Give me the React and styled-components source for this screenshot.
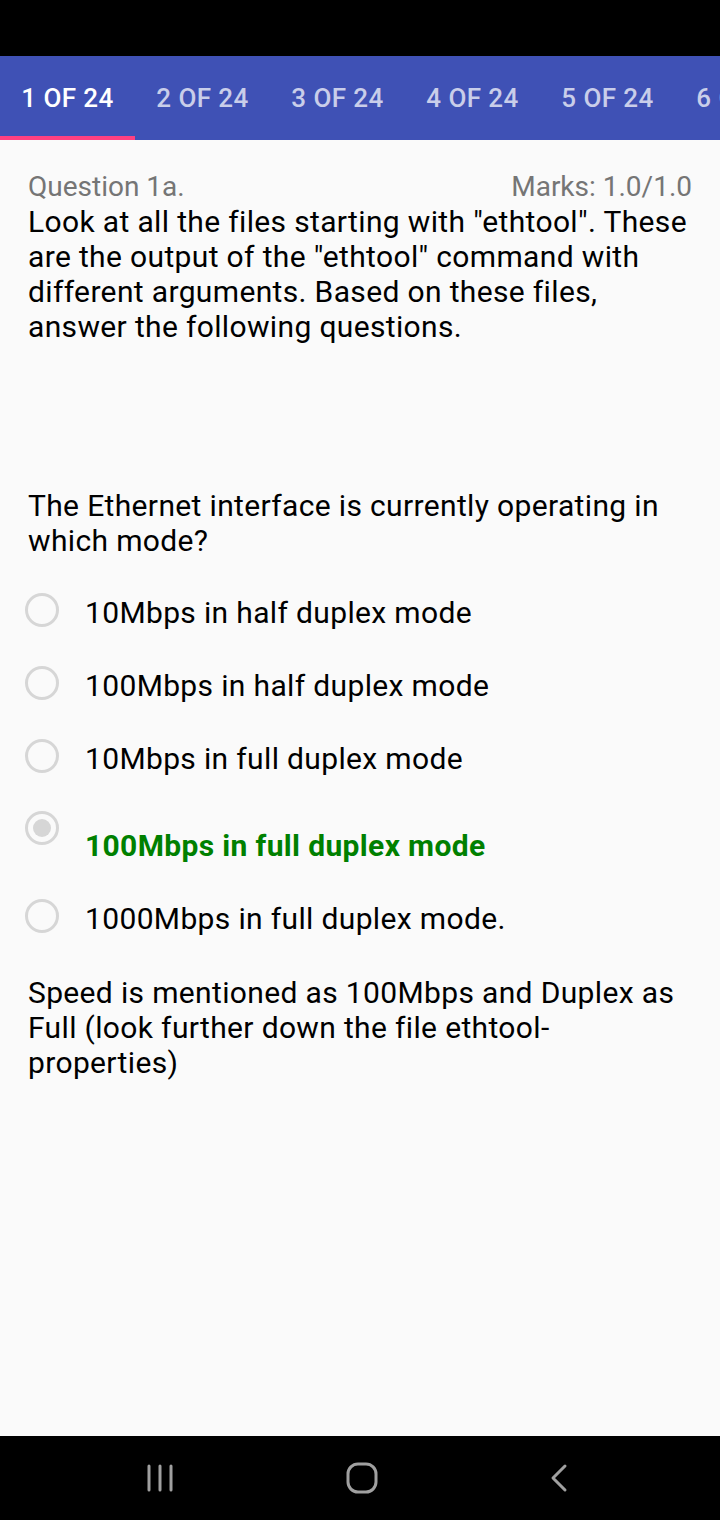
import React from 'react';
import styled, { createGlobalStyle } from 'styled-components';

const Global = createGlobalStyle`
  html, body { margin: 0; padding: 0; background: #000; }
  body { font-family: Roboto, "Noto Sans", sans-serif; }
`;

const Screen = styled.div`
  width: 720px;
  height: 1520px;
  display: flex;
  flex-direction: column;
  background: #fafafa;
  overflow: hidden;
`;

const StatusBar = styled.div`
  height: 56px;
  background: #000;
  flex-shrink: 0;
`;

const Tabs = styled.div`
  height: 84px;
  background: #3f51b5;
  display: flex;
  flex-shrink: 0;
  overflow: hidden;
`;

const Tab = styled.div`
  position: relative;
  flex: 0 0 135px;
  display: flex;
  align-items: center;
  justify-content: center;
  font-size: 26px;
  font-weight: 500;
  letter-spacing: 0.4px;
  color: ${p => (p.active ? '#ffffff' : 'rgba(255,255,255,0.72)')};
  white-space: nowrap;
  &::after {
    content: '';
    display: ${p => (p.active ? 'block' : 'none')};
    position: absolute;
    left: 0;
    right: 0;
    bottom: 0;
    height: 4px;
    background: #ff4081;
  }
`;

const Content = styled.div`
  flex: 1;
  padding: 30px 28px 0 28px;
  display: flex;
  flex-direction: column;
`;

const Header = styled.div`
  display: flex;
  justify-content: space-between;
  font-size: 28px;
  line-height: 34px;
  color: #757575;
`;

const Para = styled.p`
  margin: ${p => p.mt || 0}px 0 0 0;
  font-size: 30px;
  line-height: 35px;
  letter-spacing: 0.35px;
  color: #000;
`;

const Options = styled.div`
  display: flex;
  flex-direction: column;
  margin-top: 27px;
`;

const Option = styled.div`
  display: flex;
  align-items: flex-start;
  height: ${p => (p.tall ? 87 : 73)}px;
`;

const Radio = styled.span`
  flex: 0 0 auto;
  width: 28px;
  height: 28px;
  margin: ${p => (p.tall ? 7 : 8)}px 0 0 -3px;
  border: 3px solid #d6d6d6;
  border-radius: 50%;
  display: flex;
  align-items: center;
  justify-content: center;
  &::after {
    content: '';
    display: ${p => (p.checked ? 'block' : 'none')};
    width: 18px;
    height: 18px;
    border-radius: 50%;
    background: #d6d6d6;
  }
`;

const Label = styled.span`
  margin-left: 26px;
  margin-top: ${p => (p.tall ? 24 : 10)}px;
  font-size: 30px;
  line-height: 35px;
  letter-spacing: 0.35px;
  color: ${p => (p.correct ? '#008000' : '#000')};
  font-weight: ${p => (p.correct ? 700 : 400)};
`;

const NavBar = styled.div`
  height: 84px;
  background: #000;
  flex-shrink: 0;
  display: flex;
  align-items: center;
  gap: 171px;
  padding-left: 145px;
`;

const tabs = ['1 OF 24', '2 OF 24', '3 OF 24', '4 OF 24', '5 OF 24', '6 OF 24'];
const options = [
  '10Mbps in half duplex mode',
  '100Mbps in half duplex mode',
  '10Mbps in full duplex mode',
  '100Mbps in full duplex mode',
  '1000Mbps in full duplex mode.',
];

export default function App() {
  return (
    <Screen>
      <Global />
      <StatusBar />
      <Tabs>
        {tabs.map((t, i) => (
          <Tab key={t} active={i === 0}>{t}</Tab>
        ))}
      </Tabs>
      <Content>
        <Header>
          <span>Question 1a.</span>
          <span>Marks: 1.0/1.0</span>
        </Header>
        <Para>
          Look at all the files starting with "ethtool". These are the output of the "ethtool"
          command with different arguments. Based on these files, answer the following questions.
        </Para>
        <Para mt={144}>The Ethernet interface is currently operating in which mode?</Para>
        <Options>
          {options.map((o, i) => (
            <Option key={o} tall={i === 3}>
              <Radio checked={i === 3} tall={i === 3} />
              <Label correct={i === 3} tall={i === 3}>{o}</Label>
            </Option>
          ))}
        </Options>
        <Para mt={11}>
          Speed is mentioned as 100Mbps and Duplex as Full (look further down the file ethtool-properties)
        </Para>
      </Content>
      <NavBar>
        <svg width="30" height="30" viewBox="0 0 30 30">
          <g stroke="#a0a0a0" strokeWidth="3" strokeLinecap="round">
            <line x1="4" y1="3" x2="4" y2="27" />
            <line x1="15" y1="3" x2="15" y2="27" />
            <line x1="26" y1="3" x2="26" y2="27" />
          </g>
        </svg>
        <svg width="32" height="32" viewBox="0 0 32 32">
          <rect x="2" y="2" width="28" height="28" rx="10" fill="none" stroke="#a0a0a0" strokeWidth="3" />
        </svg>
        <svg width="20" height="30" viewBox="0 0 20 30">
          <polyline points="16,3 4,15 16,27" fill="none" stroke="#a0a0a0" strokeWidth="3" strokeLinecap="round" strokeLinejoin="round" />
        </svg>
      </NavBar>
    </Screen>
  );
}
